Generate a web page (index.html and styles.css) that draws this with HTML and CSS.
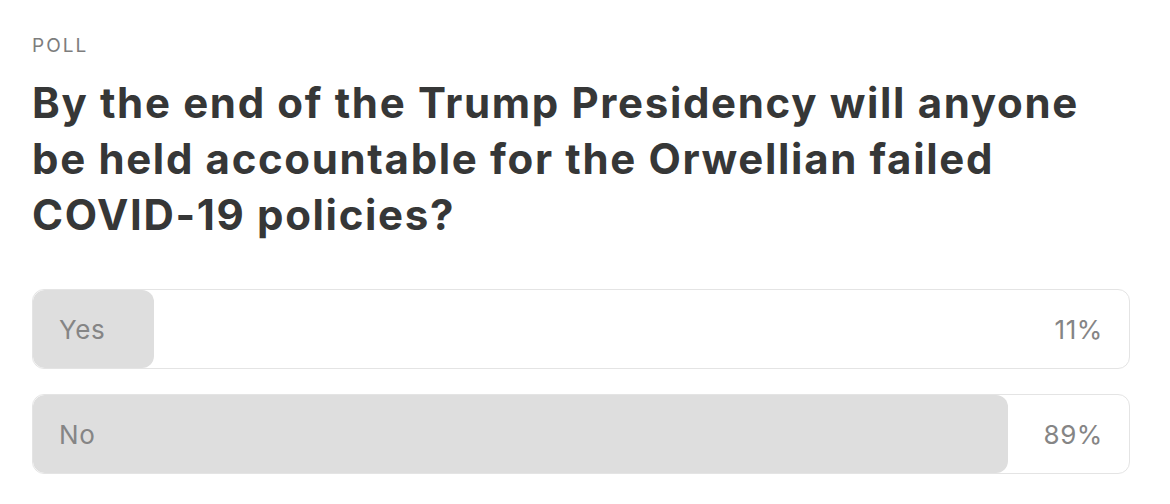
FILE: index.html
```html
<!DOCTYPE html>
<html lang="en">
<head>
    <meta charset="UTF-8">
    <title>Poll</title>
    <link rel="stylesheet" href="styles.css">
</head>
<body>
    <div class="poll">
        <div class="poll-label">POLL</div>
        <h1 class="poll-question">By the end of the Trump Presidency will anyone be held accountable for the Orwellian failed COVID-19 policies?</h1>

        <div class="options">
            <div class="option">
                <div class="fill" style="width: 11%"></div>
                <span class="option-name">Yes</span>
                <span class="option-pct">11%</span>
            </div>
            <div class="option">
                <div class="fill" style="width: 89%"></div>
                <span class="option-name">No</span>
                <span class="option-pct">89%</span>
            </div>
        </div>
    </div>
</body>
</html>
```

FILE: styles.css
```css
body {
    margin: 0;
    background-color: #ffffff;
    font-family: Inter, "Noto Sans", sans-serif;
    color: #363737;
}

.poll {
    padding: 34px 40px 0 32px;
}

.poll-label {
    font-size: 19px;
    line-height: 24px;
    letter-spacing: 2px;
    color: #7d7d7d;
}

.poll-question {
    max-width: 1090px;
    margin: 17px 0 46px 0;
    font-size: 42px;
    line-height: 56px;
    font-weight: 700;
    letter-spacing: 1.65px;
}

.options {
    display: flex;
    flex-direction: column;
    gap: 25px;
}

/* one answer row */
.option {
    position: relative;
    display: flex;
    justify-content: space-between;
    align-items: center;
    height: 78px;
    padding: 0 26px;
    border: 1.5px solid #e4e4e4;
    border-radius: 12px;
    overflow: hidden;
    font-size: 26px;
    letter-spacing: 0.6px;
    color: #858585;
}

.fill {
    position: absolute;
    left: 0;
    top: 0;
    bottom: 0;
    background-color: #dedede;
    border-radius: 12px;
}

.option-name,
.option-pct {
    position: relative;
}
```
